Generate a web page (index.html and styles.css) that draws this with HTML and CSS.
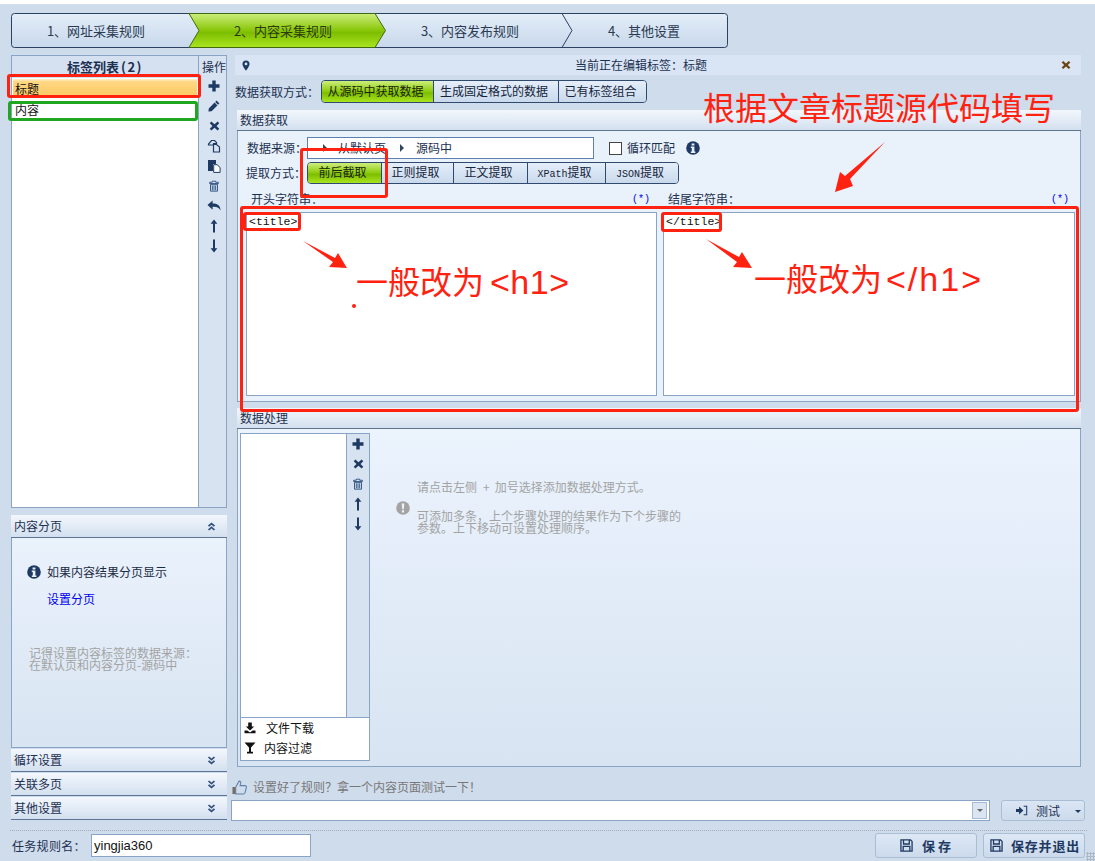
FILE: index.html
```html
<!DOCTYPE html>
<html lang="zh-CN">
<head>
<meta charset="utf-8">
<title>内容采集规则</title>
<link rel="stylesheet" href="styles.css">
</head>
<body>
<svg class="defs" width="0" height="0">
  <symbol id="i-plus" viewBox="0 0 12 12"><path d="M4.3 0.5h3.4v3.8h3.8v3.4H7.7v3.8H4.3V7.7H0.5V4.3h3.8z"/></symbol>
  <symbol id="i-x" viewBox="0 0 12 12"><path d="M2.6 1.2 6 4.2 9.4 1.2 11.2 3 8.2 6 11.2 9 9.4 10.8 6 7.8 2.6 10.8 0.8 9 3.8 6 0.8 3Z"/></symbol>
  <symbol id="i-pencil" viewBox="0 0 12 12"><path d="M8.6 0.6 11.4 3.4 10 4.8 7.2 2ZM6.6 2.6 9.4 5.4 3.6 11.2 0.4 11.6 0.8 8.4Z"/></symbol>
  <symbol id="i-copy" viewBox="0 0 14 14"><path d="M4.5 1.5h3l2 2v1H6.5v1.5H1.5V5zM6.5 5.5h3l3 2.5v5h-6z" fill="none" stroke="#1f3a62" stroke-width="1.2"/></symbol>
  <symbol id="i-paste" viewBox="0 0 14 14"><path d="M1 1h8v4H6v7H1z"/><path d="M6.7 5.7h3.4l3 2.8v4.9H6.7z" fill="#fff" stroke="#1f3a62"/></symbol>
  <symbol id="i-trash" viewBox="0 0 12 14"><path d="M4 1.2h4v1.3h3.2v1.6H.8V2.5H4zM1.8 5h8.4v8.2H1.8zM4 6.2v6M6 6.2v6M8 6.2v6" fill="none" stroke="#2c4f80" stroke-width="1.1"/></symbol>
  <symbol id="i-undo" viewBox="0 0 14 14"><path d="M5.6 1.5V4.4c4.6-.2 8 1.6 7.9 7.4-1-3-3.4-4.2-7.9-4V10.8L.5 6.1z"/></symbol>
  <symbol id="i-up" viewBox="0 0 8 14"><path d="M4 .5 7.4 4.8H5V13.5H3V4.8H.6z"/></symbol>
  <symbol id="i-down" viewBox="0 0 8 14"><path d="M4 13.5 .6 9.2H3V.5H5V9.2H7.4z"/></symbol>
  <symbol id="i-info" viewBox="0 0 14 14"><circle cx="7" cy="7" r="6.8"/><path d="M5.6 2.4h2.8v2H5.6zM4.8 5.5h3.6v5h1v1.4H4.8v-1.4h1V7H4.8z" fill="#e8f0fa"/></symbol>
  <symbol id="i-warn" viewBox="0 0 14 14"><circle cx="7" cy="7" r="6.8" fill="#a3a3a3"/><path d="M5.7 2.6h2.6L7.8 8.2H6.2zM5.9 9.2h2.2v2.2H5.9z" fill="#eef3fa"/></symbol>
  <symbol id="i-pin" viewBox="0 0 10 14"><path fill-rule="evenodd" d="M5 .5A4.5 4.5 0 0 1 9.5 5C9.5 8 5 13.5 5 13.5S.5 8 .5 5A4.5 4.5 0 0 1 5 .5ZM5 3.2A1.8 1.8 0 1 0 5 6.8 1.8 1.8 0 0 0 5 3.2Z"/></symbol>
  <symbol id="i-dup" viewBox="0 0 10 10"><path d="M5 .5 9 4 7.6 5.2 5 3 2.4 5.2 1 4ZM5 4.8 9 8.3 7.6 9.5 5 7.3 2.4 9.5 1 8.3Z"/></symbol>
  <symbol id="i-ddown" viewBox="0 0 10 10"><path d="M5 5.2 9 1.7 7.6 .5 5 2.7 2.4 .5 1 1.7ZM5 9.5 9 6 7.6 4.8 5 7 2.4 4.8 1 6Z"/></symbol>
  <symbol id="i-thumb" viewBox="0 0 16 16"><path d="M.5 7.5h3.4v7.5H.5z" fill="#7b6a60" stroke="none"/><path d="M4 7.5 7.6 1.2c1.5 0 2 1 1.6 2.4L8.6 6H14c1.2 0 1.6 1 1.3 2l-1.4 5.6c-.2.9-.8 1.4-1.7 1.4H4z" fill="none" stroke="#5f7fa8" stroke-width="1.1"/></symbol>
  <symbol id="i-dl" viewBox="0 0 12 12"><path d="M4.2 .5h3.6v4h2.4L6 8.6 1.8 4.5h2.4zM.5 8.6h2.8L6 10.4l2.7-1.8h2.8v2.6H.5z"/></symbol>
  <symbol id="i-filter" viewBox="0 0 12 12"><path d="M.5 .5h11L7 5.6v4.2h2v1.7H3V9.8h2V5.6z"/></symbol>
  <symbol id="i-save" viewBox="0 0 14 14"><path d="M1 1h10.4L13 2.6V13H1zM3.8 1v4.4h6.2V1M3.4 13V8h7.2v5" fill="none" stroke="#1f3a62" stroke-width="1.4"/></symbol>
  <symbol id="i-login" viewBox="0 0 14 12"><path d="M0 4.2h3.6V1.2L8.6 6l-5 4.8V7.8H0z"/><path d="M9 1h3.5v10H9" fill="none" stroke="#1f3a62" stroke-width="1.2"/></symbol>
</svg>

<header class="stepper">
  <svg class="stepper-art" width="718" height="36" viewBox="0 0 718 36">
    <defs>
      <linearGradient id="g-blue" x1="0" y1="0" x2="0" y2="1"><stop offset="0" stop-color="#e3edf9"/><stop offset="1" stop-color="#c8d8ea"/></linearGradient>
      <linearGradient id="g-green" x1="0" y1="0" x2="0" y2="1"><stop offset="0" stop-color="#cdee7c"/><stop offset=".5" stop-color="#88c608"/><stop offset=".56" stop-color="#7dbd00"/><stop offset="1" stop-color="#aae620"/></linearGradient>
    </defs>
    <rect x=".5" y=".5" width="716" height="34" rx="3" fill="url(#g-blue)" stroke="#2b4162"/>
    <path d="M178 .5H364L374.5 17.5 364 34.5H178L188 17.5Z" fill="url(#g-green)" stroke="#3f6a10"/>
    <path d="M551 .5 561 17.5 551 34.5" fill="none" stroke="#2b4162"/>
  </svg>
  <nav class="steps">
    <span class="step s1">1、网址采集规则</span>
    <span class="step s2">2、内容采集规则</span>
    <span class="step s3">3、内容发布规则</span>
    <span class="step s4">4、其他设置</span>
  </nav>
</header>

<main class="main">
  <aside class="left">
    <section class="taglist">
      <div class="tags">
        <h2 class="tags-title">标签列表<span class="count">(2)</span></h2>
        <ul class="tag-rows">
          <li class="tag is-on">标题</li>
          <li class="tag">内容</li>
        </ul>
      </div>
      <div class="ops">
        <div class="ops-title">操作</div>
        <svg class="ic i12"><use href="#i-plus"/></svg>
        <svg class="ic i12"><use href="#i-pencil"/></svg>
        <svg class="ic i11"><use href="#i-x"/></svg>
        <svg class="ic i14"><use href="#i-copy"/></svg>
        <svg class="ic i14"><use href="#i-paste"/></svg>
        <svg class="ic i13"><use href="#i-trash"/></svg>
        <svg class="ic i14"><use href="#i-undo"/></svg>
        <svg class="ic i14"><use href="#i-up"/></svg>
        <svg class="ic i14"><use href="#i-down"/></svg>
      </div>
    </section>

    <section class="acc">
      <div class="acc-head">内容分页<svg class="acc-ic"><use href="#i-dup"/></svg></div>
      <div class="acc-body">
        <p class="acc-info"><svg class="info-ic"><use href="#i-info"/></svg>如果内容结果分页显示</p>
        <a class="acc-link">设置分页</a>
        <p class="acc-note">记得设置内容标签的数据来源：<br>在默认页和内容分页-源码中</p>
      </div>
      <div class="acc-head">循环设置<svg class="acc-ic"><use href="#i-ddown"/></svg></div>
      <div class="acc-head">关联多页<svg class="acc-ic"><use href="#i-ddown"/></svg></div>
      <div class="acc-head">其他设置<svg class="acc-ic"><use href="#i-ddown"/></svg></div>
    </section>
  </aside>

  <div class="right">
    <div class="topbar">
      <svg class="pin-ic"><use href="#i-pin"/></svg>
      <span class="topbar-text">当前正在编辑标签：标题</span>
      <svg class="close-ic"><use href="#i-x"/></svg>
    </div>

    <div class="source-row">
      <span class="source-label">数据获取方式：</span>
      <div class="seg-group">
        <span class="seg on w112">从源码中获取数据</span>
        <span class="seg w125">生成固定格式的数据</span>
        <span class="seg w89">已有标签组合</span>
      </div>
    </div>

    <section class="panel">
      <h3 class="panel-head">数据获取</h3>
      <div class="panel-body fetch">
        <div class="form-row first">
          <span class="form-label">数据来源：</span>
          <div class="crumb"><span class="tri"></span><span class="crumb-a">从默认页</span><span class="tri"></span><span>源码中</span></div>
          <span class="check"></span><span class="check-text">循环匹配</span>
          <svg class="info-ic gap"><use href="#i-info"/></svg>
        </div>
        <div class="form-row second">
          <span class="form-label shift">提取方式：</span>
          <div class="seg-group small">
            <span class="seg on w73">前后截取</span>
            <span class="seg w72">正则提取</span>
            <span class="seg w74">正文提取</span>
            <span class="seg w78"><span class="mono">XPath</span>提取</span>
            <span class="seg w73"><span class="mono">JSON</span>提取</span>
          </div>
        </div>
        <div class="str-labels">
          <div class="str-label l"><span>开头字符串：</span><span class="star">(*)</span></div>
          <div class="str-label r"><span>结尾字符串：</span><span class="star">(*)</span></div>
        </div>
        <div class="str-boxes">
          <div class="str-box l">&lt;title&gt;</div>
          <div class="str-box r">&lt;/title&gt;</div>
        </div>
      </div>
    </section>

    <section class="panel second-panel">
      <h3 class="panel-head">数据处理</h3>
      <div class="panel-body process">
        <div class="proc">
          <div class="proc-top">
            <div class="proc-list"></div>
            <div class="proc-ops">
              <svg class="ic i12"><use href="#i-plus"/></svg>
              <svg class="ic i11"><use href="#i-x"/></svg>
              <svg class="ic i13"><use href="#i-trash"/></svg>
              <svg class="ic i14"><use href="#i-up"/></svg>
              <svg class="ic i14"><use href="#i-down"/></svg>
            </div>
          </div>
          <ul class="proc-menu">
            <li class="proc-item"><svg class="menu-ic"><use href="#i-dl"/></svg><span class="t-a">文件下载</span></li>
            <li class="proc-item"><svg class="menu-ic"><use href="#i-filter"/></svg>内容过滤</li>
          </ul>
        </div>
        <div class="hint">
          <svg class="warn-ic"><use href="#i-warn"/></svg>
          <div class="hint-text">
            <p class="hint-p">请点击左侧<span class="plus">+</span>加号选择添加数据处理方式。</p>
            <p>可添加多条，上个步骤处理的结果作为下个步骤的<br>参数。上下移动可设置处理顺序。</p>
          </div>
        </div>
      </div>
    </section>

    <div class="try-row"><svg class="thumb-ic"><use href="#i-thumb"/></svg>设置好了规则？拿一个内容页面测试一下！</div>
    <div class="test-row">
      <div class="combo"><span class="combo-btn"><span class="caret"></span></span></div>
      <div class="test-btn"><svg class="login-ic"><use href="#i-login"/></svg><span>测试</span><span class="caret dark"></span></div>
    </div>
  </div>
</main>

<div class="dots"></div>
<footer class="footer">
  <span class="footer-label">任务规则名：</span>
  <div class="name-input">yingjia360</div>
  <div class="btn b1"><svg class="save-ic"><use href="#i-save"/></svg><span class="wide">保 存</span></div>
  <div class="btn b2"><svg class="save-ic"><use href="#i-save"/></svg><span>保存并退出</span></div>
</footer>
<div class="grip"></div>

<svg class="notes" width="1095" height="861" viewBox="0 0 1095 861">
  <rect class="note-red" x="8.5" y="75.5" width="191" height="21" rx="1.5"/>
  <rect class="note-green" x="9.5" y="102.5" width="187" height="17" rx="1.5"/>
  <rect class="note-red" x="301.5" y="149.5" width="85" height="47" rx="1.5"/>
  <rect class="note-red" x="241.5" y="207.5" width="836" height="203" rx="1.5"/>
  <rect class="note-red" x="244.5" y="213.5" width="55" height="16" rx="1.5"/>
  <rect class="note-red" x="662.5" y="213.5" width="58" height="17" rx="1.5"/>
  <polygon class="note-fill" points="885,142 850,179 853,186 835,192 840,172 845,176"/>
  <polygon class="note-fill" points="303,241 335,258 338,253 347,268 329,267 333,262"/>
  <polygon class="note-fill" points="706,239 739,257 742,252 752,268 733,267 737,262"/>
  <circle class="note-fill" cx="354" cy="306" r="2"/>
  <text class="note-text" x="703" y="120">根据文章标题源代码填写</text>
  <text class="note-text" x="356" y="294">一般改为<tspan class="note-latin wide-h" dx="6">&lt;h1&gt;</tspan></text>
  <text class="note-text" x="754" y="291">一般改为<tspan class="note-latin wide-latin" dx="4">&lt;/h1&gt;</tspan></text>
</svg>
</body>
</html>
```
FILE: styles.css
```css
* { box-sizing: border-box; }
html, body { margin: 0; padding: 0; }
body {
  position: relative;
  width: 1095px;
  height: 861px;
  overflow: hidden;
  background: #cfdcec;
  border-top: 4px solid #fff;
  font: 12px/14px "Noto Sans CJK SC", "Liberation Sans", sans-serif;
  color: #1c3050;
}
h2, h3, p, ul { margin: 0; padding: 0; font-weight: normal; }
ul { list-style: none; }
svg { display: block; fill: #1f3a62; }
.defs { position: absolute; }

/* stepper */
.stepper { position: relative; width: 718px; height: 36px; margin: 9px 0 0 11px; }
.stepper-art { position: absolute; left: 0; top: 0; }
.steps { position: relative; display: flex; height: 35px; font-size: 13px; line-height: 35px; color: #2a3a52; }
.step { text-align: center; white-space: nowrap; }
.s1 { width: 170px; }
.s2 { width: 204px; color: #2c3a10; }
.s3 { width: 170px; }
.s4 { width: 173px; padding-left: 5px; }

/* main */
.main { display: flex; gap: 4px; margin: 6px 0 0 11px; height: 766px; }
.left { width: 216px; display: flex; flex-direction: column; gap: 7px; }
.right { width: 855px; }

.taglist { display: flex; height: 453px; border: 1px solid #8aa4c5; background: #d8e3f1; }
.tags { width: 187px; border-right: 1px solid #8aa4c5; background: #fff; }
.tags-title { height: 22px; background: #d5e1f0; font-size: 13px; font-weight: 700; line-height: 22px; text-align: center; }
.count { margin-left: 2px; letter-spacing: 1.5px; }
.tag-rows { padding: 1px 1px 0; }
.tag { height: 18px; padding-left: 2px; margin-bottom: 3px; font-size: 12px; line-height: 20px; color: #111; }
.tag.is-on { background: linear-gradient(#fff2cf 0, #ffd784 15%, #fcc862 100%); }
.ops { width: 27px; padding-left: 3px; display: flex; flex-direction: column; align-items: center; }
.ops-title { height: 20px; font-size: 12px; line-height: 21px; white-space: nowrap; }
.ic { flex: none; margin: 3px 0; height: 14px; }
.i11 { width: 11px; }
.i12 { width: 12px; }
.i13 { width: 10px; height: 12px; margin: 4px 0; }
.i14 { width: 14px; }

.acc { display: flex; flex-direction: column; gap: 1px; }
.acc-head {
  position: relative;
  height: 23px;
  padding-left: 3px;
  border-bottom: 1px solid #5f7492;
  background: linear-gradient(#f3f7fd, #d3e0ef);
  font-size: 12px;
  line-height: 22px;
}
.acc-ic { position: absolute; right: 11px; top: 7px; width: 9px; height: 9px; fill: #34527e; }
.acc-body {
  height: 210px;
  margin-top: -1px;
  padding-top: 27px;
  border: 1px solid #8aa4c5;
  border-top: 0;
  background: linear-gradient(#eaf2fc, #d8e4f2);
}
.acc-info { display: flex; align-items: center; gap: 6px; padding-left: 15px; color: #1c2c44; }
.acc-link { display: block; margin: 13px 0 0 35px; color: #0000ee; }
.acc-note { margin: 41px 0 0 17px; line-height: 11.5px; color: #a3a3a3; }
.info-ic { width: 14px; height: 14px; flex: none; }
.info-ic.gap { margin-left: 11px; }

/* right top */
.topbar { position: relative; display: flex; align-items: center; width: 846px; height: 20px; margin-left: 4px; background: #d9e5f4; }
.pin-ic { width: 8px; height: 11px; margin-left: 7px; }
.topbar-text { margin-left: 325px; white-space: nowrap; }
.close-ic { position: absolute; right: 10px; top: 5px; width: 10px; height: 10px; fill: #6b4414; }

.source-row { display: flex; align-items: center; height: 23px; margin: 5px 0 0 4px; }
.source-label { width: 86px; white-space: nowrap; }
.seg-group { display: flex; height: 23px; border: 1px solid #2f4a6e; border-radius: 4px; overflow: hidden; }
.seg-group.small { height: 22px; }
.seg {
  display: block;
  padding: 3px 4px 0 0;
  border-left: 1px solid #2f4a6e;
  background: linear-gradient(#e5eefa, #c9d9eb);
  text-align: center;
  white-space: nowrap;
  color: #15233a;
}
.seg-group.small .seg { padding-top: 2px; }
.seg:first-child { border-left: 0; }
.seg.on { background: linear-gradient(#cdee7c 0, #8ccb0c 50%, #7dbd00 56%, #a8e41e 100%); color: #17240a; }
.w112 { width: 111px; }
.w125 { width: 125px; }
.w89 { width: 88px; }
.w73 { width: 73px; }
.w74 { width: 74px; }
.w72 { width: 72px; }
.w78 { width: 78px; }
.mono { font: 10px/14px "Liberation Mono", monospace; }

/* panels */
.panel { width: 844px; margin: 7px 0 0 6px; }
.second-panel { margin-top: 6px; }
.panel-head {
  height: 21px;
  padding-left: 3px;
  border-bottom: 1px solid #5f7492;
  background: linear-gradient(#f3f7fd, #d3e0ef);
  font-size: 12px;
  line-height: 20px;
}
.panel-body { border: 1px solid #8aa4c5; border-top: 0; }
.fetch { height: 271px; padding: 6px 5px 0 8px; background: #e9f1fa; }
.form-row { display: flex; align-items: center; height: 22px; }
.form-row.second { margin-top: 3px; }
.form-label { width: 61px; padding-left: 1px; white-space: nowrap; }
.form-label.shift { padding-left: 0; }
.crumb { display: flex; align-items: center; width: 287px; height: 22px; padding-left: 15px; border: 1px solid #5d80ad; background: #fff; }
.crumb-a { margin: 0 14px 0 11px; }
.tri { display: block; width: 0; height: 0; border-left: 4px solid #33465f; border-top: 4px solid transparent; border-bottom: 4px solid transparent; }
.crumb .tri + span + .tri { margin-right: 12px; }
.check { width: 13px; height: 13px; margin-left: 15px; border: 1px solid #444; background: #fff; }
.check-text { margin-left: 5px; white-space: nowrap; }
.str-labels { display: flex; gap: 6px; margin-top: 8px; }
.str-label { display: flex; justify-content: space-between; height: 15px; }
.str-label.l { width: 411px; padding: 0 7px 0 5px; }
.str-label.r { width: 412px; padding: 0 6px 0 5px; }
.star { font: 10px/15px "Liberation Mono", monospace; color: #0000ee; }
.str-boxes { display: flex; gap: 6px; margin-top: 5px; }
.str-box { height: 184px; padding: 2px; border: 1px solid #8aa4c5; background: #fff; font: 11.5px/14px "Liberation Mono", monospace; color: #111; }
.str-box.l { width: 411px; }
.str-box.r { width: 412px; }

.process { display: flex; height: 338px; padding: 4px 0 0 2px; background: linear-gradient(#ebf3fd, #d8e4f2); }
.proc { display: flex; flex-direction: column; width: 130px; height: 328px; border: 1px solid #8aa4c5; background: #fff; }
.proc-top { display: flex; height: 284px; border-bottom: 1px solid #8aa4c5; }
.proc-list { width: 106px; border-right: 1px solid #8aa4c5; background: #fff; }
.proc-ops { display: flex; flex: 1; flex-direction: column; align-items: center; background: #d8e3f1; }
.proc-item { display: flex; align-items: center; height: 20px; padding-left: 3px; color: #111; }
.menu-ic { width: 12px; height: 12px; margin-right: 8px; fill: #111; }
.t-a { margin-left: 2px; }
.hint { display: flex; align-items: center; gap: 7px; height: 53px; margin: 48px 0 0 26px; color: #a3a3a3; }
.warn-ic { width: 14px; height: 14px; flex: none; }
.hint-text { line-height: 12px; }
.hint-p { margin-bottom: 17px; }
.plus { margin: 0 5px 0 6px; }

.try-row { display: flex; align-items: center; gap: 6px; height: 16px; margin: 12px 0 0 1px; color: #777; white-space: nowrap; }
.thumb-ic { width: 15px; height: 15px; }
.test-row { display: flex; gap: 11px; margin-top: 5px; }
.combo { display: flex; justify-content: flex-end; align-items: center; width: 759px; height: 21px; padding-right: 2px; border: 1px solid #8aa4c5; background: #fff; }
.combo-btn { display: flex; align-items: center; justify-content: center; width: 15px; height: 17px; border: 1px solid #a6bbd4; background: #dbe5f2; }
.caret { display: block; width: 0; height: 0; border-top: 3px solid #666; border-left: 3px solid transparent; border-right: 3px solid transparent; }
.caret.dark { position: absolute; right: 3px; top: 9px; border-top-color: #1f3a62; }
.test-btn { position: relative; display: flex; align-items: center; width: 84px; height: 21px; padding-left: 14px; gap: 8px; border: 1px solid #a9bdd5; border-radius: 3px; background: linear-gradient(#dbe6f4, #ccdaeb); }
.login-ic { width: 12px; height: 11px; }

/* footer */
.dots { width: 1077px; margin: 9px 0 0 10px; border-top: 1px dotted #a4abb4; }
.footer { display: flex; align-items: center; height: 25px; margin-top: 2px; padding-left: 12px; }
.footer-label { width: 79px; letter-spacing: .3px; white-space: nowrap; }
.name-input { width: 220px; height: 23px; padding-left: 2px; border: 1px solid #8aa4c5; background: #fff; font: 13px/21px "Liberation Sans", sans-serif; color: #111; }
.btn { display: flex; align-items: center; height: 25px; width: 102px; border: 1px solid #a9bdd5; border-radius: 3px; background: linear-gradient(#dde8f6, #ccdaeb); font-size: 13px; font-weight: 700; color: #1f3a62; white-space: nowrap; }
.b1 { margin-left: 564px; padding-left: 24px; gap: 9px; }
.b2 { margin-left: 6px; padding-left: 6px; gap: 8px; letter-spacing: .8px; }
.wide { letter-spacing: 0; }
.save-ic { width: 13px; height: 13px; }
.grip { position: absolute; right: 0; bottom: 0; width: 9px; height: 9px; background: radial-gradient(circle, #aeb8c4 1px, transparent 1.2px) 0 0 / 3px 3px; }

/* annotations laid over the screenshot */
.notes { position: absolute; left: 0; top: -4px; fill: none; }
.note-red { fill: none; stroke: #ff2211; stroke-width: 3; }
.note-green { fill: none; stroke: #1fa81f; stroke-width: 3; }
.note-fill { fill: #ff2211; }
.note-text { fill: #ff2211; font: 32px "Noto Sans CJK SC", sans-serif; }
.note-latin { font: 34px "Liberation Sans", sans-serif; }
.wide-h { letter-spacing: .5px; }
.wide-latin { letter-spacing: 2px; }
```
